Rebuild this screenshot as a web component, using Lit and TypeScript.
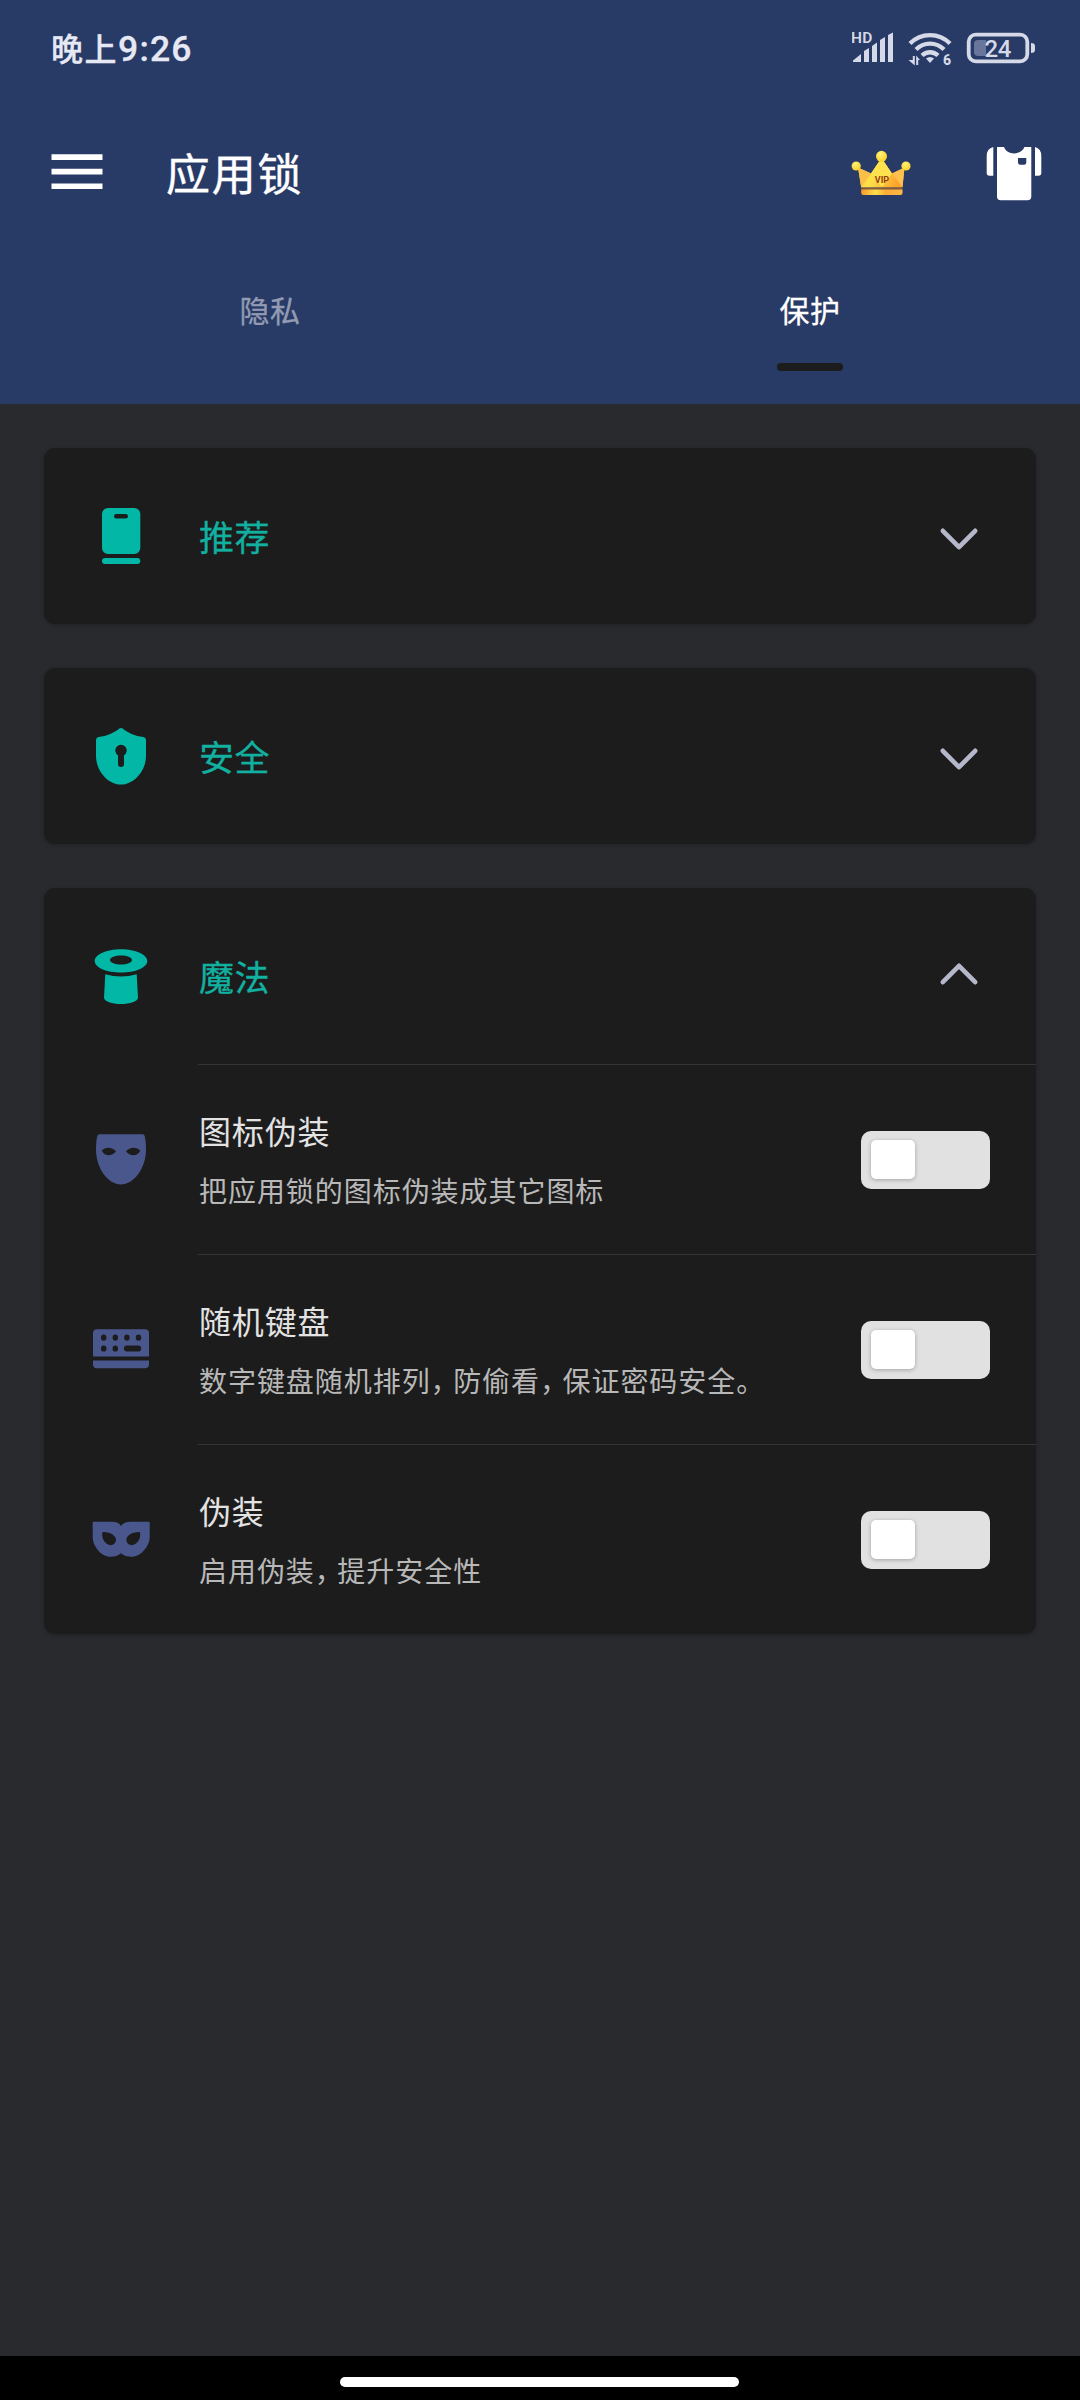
import { LitElement, html, svg, css, nothing } from "lit";
import type { TemplateResult } from "lit";
import { customElement, property, state } from "lit/decorators.js";
import { classMap } from "lit/directives/class-map.js";

/* All list icons are drawn on a 66 x 66 grid. */
const ICONS: Record<string, TemplateResult> = {
  phone: svg`<path fill-rule="evenodd" d="M20 5H46.300a6 6 0 0 1 6 6V45a6 6 0 0 1-6 6H20a6 6 0 0 1-6-6V11a6 6 0 0 1 6-6ZM28.300 11a2.300 2.300 0 0 0 0 4.600H37.700a2.300 2.300 0 0 0 0-4.600Z"/><rect x="14" y="55" width="38.300" height="6" rx="3"/>`,
  shield: svg`<path fill-rule="evenodd" d="M31 5.800Q33 4.300 35 5.800C39.500 9.600 47 13.200 55.500 14.100Q58 14.500 58 17V33C58 48 46 61.600 33 61.600S8 48 8 33V17Q8 14.500 10.500 14.100C19 13.200 26.500 9.600 31 5.800ZM30 32.200V41a3 3 0 0 0 6 0V32.200A5.700 5.700 0 1 0 30 32.200Z"/>`,
  hat: svg`<path fill-rule="evenodd" d="M33 6.300C47.500 6.300 59.300 11.500 59.300 18S47.500 29.600 33 29.600S6.700 24.500 6.700 18S18.500 6.300 33 6.300ZM33 12.600C27 12.600 22 14.600 22 17S27 21.500 33 21.500S44 19.500 44 17S39 12.600 33 12.600Z"/><path d="M17.300 31.200Q33 35.600 48.700 31.200L50 54.500C50 58.500 42 61 33 61S16 58.500 16 54.500Z"/>`,
  face: svg`<path fill-rule="evenodd" d="M11.500 8.200H54.500Q56.300 8.200 56.700 10C57.600 14 58 18 58 23.500C58 42 46 58.500 33 58.500S8 42 8 23.500C8 18 8.400 14 9.300 10Q9.700 8.200 11.500 8.200ZM13.700 24.700C17 21 24 20.500 28 25.500C24 30.500 17 30.800 13.700 24.700ZM52.300 24.700C49 21 42 20.500 38 25.500C42 30.500 49 30.800 52.300 24.700Z"/>`,
  keyboard: svg`<path fill-rule="evenodd" d="M9 13.300H57a4 4 0 0 1 4 4V40.500H5V17.300a4 4 0 0 1 4-4ZM13 21.200v.9a2.700 2.700 0 0 0 5.400 0v-.9a2.700 2.700 0 0 0-5.400 0ZM24.600 21.200v.9a2.700 2.700 0 0 0 5.400 0v-.9a2.700 2.700 0 0 0-5.400 0ZM36.200 21.200v.9a2.700 2.700 0 0 0 5.400 0v-.9a2.700 2.700 0 0 0-5.400 0ZM47.800 21.200v.9a2.700 2.700 0 0 0 5.400 0v-.9a2.700 2.700 0 0 0-5.400 0ZM13 32.100v.8a2.700 2.700 0 0 0 5.400 0v-.8a2.700 2.700 0 0 0-5.400 0ZM24.600 32.100v.8a2.700 2.700 0 0 0 5.400 0v-.8a2.700 2.700 0 0 0-5.400 0ZM38.900 29.500a3 3 0 0 0 0 6H50.200a3 3 0 0 0 0-6Z"/><path d="M5 44.500H61V48.200a4 4 0 0 1-4 4H9a4 4 0 0 1-4-4Z"/>`,
  domino: svg`<path fill-rule="evenodd" d="M5.500 15.800H24Q30.500 15.800 33 20Q36 15.800 42.500 15.800H61Q61.700 15.800 61.700 16.500V31C61.700 40 53 50.800 43.500 50.800Q37 50.800 33 47.300Q29 50.800 22.500 50.800C13 50.800 4.700 40 4.700 31V16.500Q4.700 15.800 5.500 15.800ZM14.500 26.200C21 25.500 28 29.500 28 33.500C28 37 25.500 39.200 22.500 39.200C18 39.200 12.800 33 14.500 26.200ZM51.900 26.200C45.400 25.500 38.400 29.500 38.400 33.500C38.400 37 40.900 39.200 43.900 39.200C48.400 39.200 53.600 33 51.900 26.200Z"/>`,
};

interface Option {
  icon: string;
  title: string;
  desc: string;
}

interface Group {
  icon: string;
  title: string;
  open: boolean;
  options: Option[];
}

@customElement("lock-switch")
class LockSwitch extends LitElement {
  @property({ type: Boolean, reflect: true }) on = false;

  static styles = css`
    :host {
      display: block;
      flex: none;
    }
    .track {
      display: flex;
      align-items: center;
      box-sizing: border-box;
      width: 129px;
      height: 58px;
      padding: 0 10px;
      border-radius: 10px;
      background: #e1e1e1;
    }
    .track.on {
      justify-content: flex-end;
    }
    .thumb {
      width: 44px;
      height: 39px;
      border-radius: 5px;
      background: #fff;
      box-shadow: 0 1px 4px rgba(0, 0, 0, 0.28);
    }
  `;

  render() {
    return html`<div
      class=${classMap({ track: true, on: this.on })}
      role="switch"
      @click=${() => (this.on = !this.on)}
    >
      <div class="thumb"></div>
    </div>`;
  }
}

@customElement("option-row")
class OptionRow extends LitElement {
  @property({ attribute: false }) option!: Option;

  static styles = css`
    :host {
      display: block;
    }
    .row {
      display: flex;
      height: 190px;
      padding-left: 44px;
      gap: 44px;
    }
    .icon {
      width: 66px;
      height: 66px;
      flex: none;
      align-self: center;
      fill: #4a578d;
    }
    .main {
      flex: 1;
      display: flex;
      align-items: center;
      box-sizing: border-box;
      border-top: 1px solid #353535;
      padding-right: 46px;
    }
    .text {
      flex: 1;
      padding: 0 0 3px 1px;
      white-space: nowrap;
    }
    .title {
      font-size: 32px;
      line-height: 48px;
      letter-spacing: 0.85px;
      color: #e3e3e3;
      font-weight: 400;
    }
    .desc {
      margin-top: 15px;
      font-size: 28px;
      line-height: 42px;
      letter-spacing: 0.95px;
      color: #b8b8b8;
      font-weight: 400;
    }
    .comma {
      letter-spacing: -5.500px;
    }
  `;

  render() {
    const { icon, title, desc } = this.option;
    const parts = desc.split("，");
    return html`<div class="row">
      <svg class="icon" viewBox="0 0 66 66">${ICONS[icon]}</svg>
      <div class="main">
        <div class="text">
          <div class="title">${title}</div>
          <div class="desc">${parts.map((p, i) => html`${i ? html`<span class="comma">，</span>` : nothing}${p}`)}</div>
        </div>
        <lock-switch></lock-switch>
      </div>
    </div>`;
  }
}

@customElement("group-card")
class GroupCard extends LitElement {
  @property({ attribute: false }) group!: Group;
  @property({ type: Boolean }) open = false;

  static styles = css`
    :host {
      display: block;
    }
    .card {
      border-radius: 11px;
      background: #1c1c1c;
      box-shadow: 0 1px 4px rgba(0, 0, 0, 0.22);
    }
    .head {
      display: flex;
      align-items: center;
      height: 176px;
      padding: 0 55px 0 44px;
      gap: 44px;
    }
    .icon {
      width: 66px;
      height: 66px;
      flex: none;
      fill: #03b7a7;
    }
    .title {
      flex: 1;
      padding: 0 0 1px 1px;
      font-size: 35px;
      line-height: 52px;
      letter-spacing: 0.6px;
      color: #12b0a0;
      -webkit-text-stroke: 0.3px #12b0a0;
    }
    .chevron {
      width: 44px;
      height: 44px;
      margin-top: 5px;
      fill: none;
      stroke: #b5b8ca;
      stroke-width: 4.600;
      stroke-linecap: round;
      stroke-linejoin: round;
    }
    .chevron.open {
      margin-top: -5px;
      transform: rotate(180deg);
    }
  `;

  render() {
    const g = this.group;
    return html`<div class="card">
      <div class="head" @click=${() => (this.open = !this.open)}>
        <svg class="icon" viewBox="0 0 66 66">${ICONS[g.icon]}</svg>
        <div class="title">${g.title}</div>
        <svg class=${classMap({ chevron: true, open: this.open })} viewBox="0 0 44 44">
          <path d="M5.800 13.800 22 30.200 38.200 13.800" />
        </svg>
      </div>
      ${this.open ? g.options.map((o) => html`<option-row .option=${o}></option-row>`) : nothing}
    </div>`;
  }
}

@customElement("app-root")
class AppRoot extends LitElement {
  @state() private tab = 1;

  private tabs = ["隐私", "保护"];

  private groups: Group[] = [
    { icon: "phone", title: "推荐", open: false, options: [] },
    { icon: "shield", title: "安全", open: false, options: [] },
    {
      icon: "hat",
      title: "魔法",
      open: true,
      options: [
        { icon: "face", title: "图标伪装", desc: "把应用锁的图标伪装成其它图标" },
        { icon: "keyboard", title: "随机键盘", desc: "数字键盘随机排列，防偷看，保证密码安全。" },
        { icon: "domino", title: "伪装", desc: "启用伪装，提升安全性" },
      ],
    },
  ];

  static styles = css`
    :host {
      display: flex;
      flex-direction: column;
      width: 1080px;
      height: 2400px;
      overflow: hidden;
      background: #292a2e;
      font-family: "Noto Sans CJK SC", sans-serif;
    }
    .header {
      flex: none;
      display: flex;
      flex-direction: column;
      height: 404px;
      background: #283a66;
    }
    .status {
      display: flex;
      align-items: center;
      justify-content: space-between;
      height: 96px;
      padding: 0 42px 0 51px;
      color: #e6e9f4;
    }
    .time {
      display: flex;
      align-items: baseline;
      font-size: 32px;
      line-height: 48px;
      font-weight: 500;
      letter-spacing: 1.5px;
      -webkit-text-stroke: 0.3px #e6e9f4;
    }
    .clock {
      font-family: Roboto, sans-serif;
      font-size: 35.500px;
      letter-spacing: 1.2px;
    }
    .indicators {
      width: 186px;
      height: 40px;
      fill: #d5d9e8;
      font-family: Roboto, sans-serif;
    }
    .appbar {
      display: flex;
      align-items: center;
      height: 154px;
      padding: 0 37px 0 51px;
    }
    .menu {
      width: 52px;
      height: 36px;
      margin-top: -3px;
      fill: #fff;
    }
    .name {
      flex: 1;
      margin-left: 63px;
      padding-bottom: 2px;
      font-size: 44px;
      line-height: 64px;
      letter-spacing: 1.7px;
      color: #fff;
      -webkit-text-stroke: 0.4px #fff;
    }
    .crown {
      width: 62px;
      height: 48px;
    }
    .shirt {
      width: 58px;
      height: 56px;
      margin: 1px 0 0 73px;
      fill: #fff;
    }
    .tabs {
      flex: 1;
      display: grid;
      grid-template-columns: 1fr 1fr;
    }
    .tab {
      display: flex;
      flex-direction: column;
      align-items: center;
      padding-top: 38px;
      gap: 32px;
      font-size: 30px;
      line-height: 43px;
      letter-spacing: 0.4px;
      color: #929bb2;
      -webkit-text-stroke: 0.3px currentColor;
    }
    .tab.active {
      color: #fff;
    }
    .tab.active::after {
      content: "";
      width: 66px;
      height: 8px;
      border-radius: 4px;
      background: #1c1c1c;
    }
    .list {
      flex: 1;
      display: flex;
      flex-direction: column;
      gap: 44px;
      padding: 44px;
    }
    .navbar {
      flex: none;
      display: flex;
      justify-content: center;
      height: 44px;
      padding: 21px 1px 0 0;
      box-sizing: border-box;
      background: #000;
    }
    .pill {
      width: 399px;
      height: 10px;
      border-radius: 5px;
      background: #fff;
    }
  `;

  /* Drawn at screen scale; the view box starts at (852, 28). */
  private indicators() {
    return html`<svg class="indicators" viewBox="852 28 186 40">
      <text x="851" y="43" font-size="15.500" font-weight="600" letter-spacing="0.4">HD</text>
      <path d="M853 62V60.500L861 54V62ZM864 62V51L869 48V62ZM872 62V46L877 42.500V62ZM880 62V40L885 37V62ZM888 62V35L893 32.500V62Z" />
      <g fill="none" stroke="#d5d9e8" stroke-width="4.300">
        <path d="M910 43.500A28 28 0 0 1 950 43.500" />
        <path d="M916 49.500A19.500 19.500 0 0 1 944 49.500" />
        <path d="M922 55.500A11.500 11.500 0 0 1 938 55.500" />
      </g>
      <path d="M926 58.500Q930 55.500 934 58.500L930 63Z" />
      <path d="M912.800 56H914.800V65.500L908.500 60H912.800ZM916.200 65V55.500L920 60H918.200V65Z" />
      <text x="943" y="65" font-size="14" font-weight="800">6</text>
      <rect x="968.700" y="34.700" width="58.600" height="26.600" rx="7" fill="none" stroke="#d5d9e8" stroke-width="3.800" />
      <path d="M978 40H986V56H978Q974 56 974 52V44Q974 40 978 40Z" fill="#69759a" />
      <path d="M1031 43Q1035 43 1035 46V50Q1035 53 1031 53Z" />
      <text x="984.500" y="57" font-size="24" font-weight="500" letter-spacing="-0.5">24</text>
    </svg>`;
  }

  private crown() {
    return html`<svg class="crown" viewBox="850 149 62 48">
      <defs>
        <linearGradient id="body" x1="0" x2="1" y1="0" y2="0.3">
          <stop offset="0" stop-color="#fbb034" />
          <stop offset="0.45" stop-color="#ffe14a" />
          <stop offset="1" stop-color="#fba52c" />
        </linearGradient>
        <linearGradient id="band">
          <stop offset="0" stop-color="#f99a2c" />
          <stop offset="0.35" stop-color="#ffe14a" />
          <stop offset="0.6" stop-color="#fbac36" />
          <stop offset="1" stop-color="#ffb845" />
        </linearGradient>
        <radialGradient id="ball" cx="0.4" cy="0.3" r="0.75">
          <stop offset="0" stop-color="#fff27a" />
          <stop offset="1" stop-color="#f8cf22" />
        </radialGradient>
      </defs>
      <path d="M858 167.500 871 173.500 881.500 158 892 173.500 904.500 167.500 902.500 187.500H861.200Z" fill="url(#body)" />
      <path d="M858 167.500 871 173.500 861.200 187Z" fill="#fbc04a" />
      <path d="M904.500 167.500 892 173.500 902.500 187Z" fill="#ffc04e" />
      <path d="M871 173.500 881.500 158 892 173.500 882 187Z" fill="#ffe24e" />
      <path d="M861.200 189.300H902.500V193Q902.500 195 900.500 195H863.200Q861.200 195 861.200 193Z" fill="url(#band)" />
      <path d="M861.200 187.800H902.500V189.300H861.200Z" fill="#8a5a36" />
      <circle cx="881.500" cy="156.300" r="5.500" fill="url(#ball)" />
      <circle cx="856.200" cy="166" r="4.600" fill="url(#ball)" />
      <circle cx="906" cy="166" r="4.600" fill="url(#ball)" />
      <text x="882" y="182.800" font-family="Roboto, sans-serif" font-size="9" font-weight="700" text-anchor="middle" fill="#963d12">VIP</text>
    </svg>`;
  }

  private shirt() {
    return html`<svg class="shirt" viewBox="985 146 58 56">
      <path fill-rule="evenodd" d="M997 147H1004C1007 155.500 1021 155.500 1024.500 147H1031.300V196.500Q1031.300 200.300 1027.500 200.300H1000.800Q997 200.300 997 196.500ZM1018 158V162.500Q1018 164.800 1020.300 164.800H1024Q1026.300 164.800 1026.300 162.500V158Z" />
      <path d="M993.300 147V175.800H989.500Q986.700 175.800 986.700 173V156Q986.700 148.500 993.300 147ZM1035 147V175.800H1038.500Q1041.300 175.800 1041.300 173V156Q1041.300 148.500 1035 147Z" />
    </svg>`;
  }

  render() {
    return html`
      <header class="header">
        <div class="status">
          <div class="time">晚上<span class="clock">9:26</span></div>
          ${this.indicators()}
        </div>
        <div class="appbar">
          <svg class="menu" viewBox="0 0 52 36">
            <path d="M.5 .3H51.500V6H.5ZM.5 14.800H51.500V20.500H.5ZM.5 29.400H51.500V35.100H.5Z" />
          </svg>
          <div class="name">应用锁</div>
          ${this.crown()} ${this.shirt()}
        </div>
        <nav class="tabs">
          ${this.tabs.map(
            (t, i) => html`<div
              class=${classMap({ tab: true, active: i === this.tab })}
              @click=${() => (this.tab = i)}
            >
              <span>${t}</span>
            </div>`
          )}
        </nav>
      </header>
      <main class="list">
        ${this.groups.map((g) => html`<group-card .group=${g} .open=${g.open}></group-card>`)}
      </main>
      <footer class="navbar"><div class="pill"></div></footer>
    `;
  }
}
